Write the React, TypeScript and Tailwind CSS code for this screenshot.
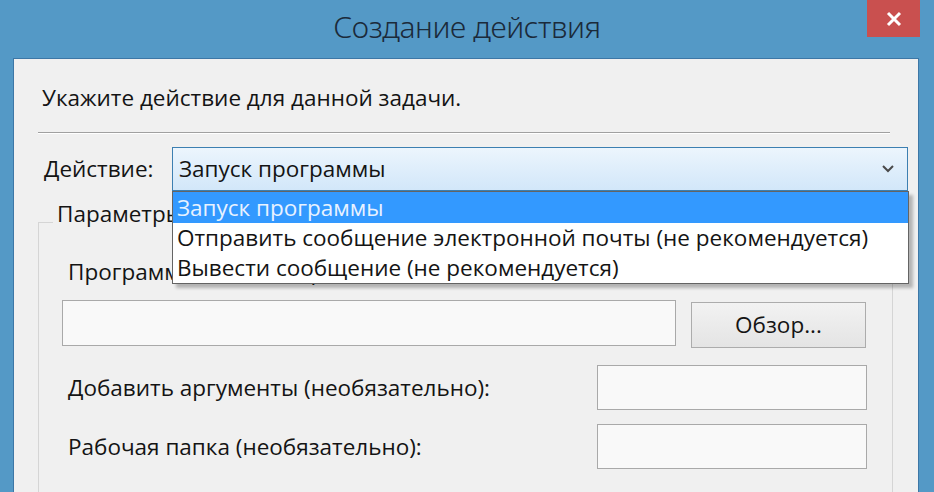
import React from "react";

const font = { fontFamily: '"Open Sans", "Noto Sans", sans-serif' };

function Chevron() {
  return (
    <svg width="14" height="10" viewBox="0 0 14 10" fill="none">
      <path d="M2 2 L7 7 L12 2" stroke="#4a4a4a" strokeWidth="2" fill="none" />
    </svg>
  );
}

function Field({ className }: { className: string }) {
  return <div className={"border border-[#a9a9a9] bg-[#f9f9f9] " + className} />;
}

export default function App() {
  return (
    <div
      className="w-[934px] h-[492px] bg-[#5499c6] overflow-hidden flex flex-col text-[#141414]"
      style={font}
    >
      {/* title bar */}
      <div className="h-[58px] relative flex justify-center shrink-0 pt-[12px]">
        <div
          className="text-[30px] text-[#1b2a3a] tracking-[-0.4px] leading-[30px]"
          style={{ fontFamily: '"Noto Sans", "Open Sans", sans-serif', fontWeight: 300 }}
        >
          Создание действия
        </div>
        <div className="absolute top-0 right-[14px] w-[53px] h-[37px] bg-[#c9504f] flex items-center justify-center">
          <svg width="16" height="16" viewBox="0 0 16 16">
            <path d="M2 2 L14 14 M14 2 L2 14" stroke="#fff" strokeWidth="3" />
          </svg>
        </div>
      </div>

      {/* client area */}
      <div className="ml-[13px] mr-[15px] flex-1 bg-[#f0f0f0] border border-[#3d77a6] border-b-0 relative text-[22.5px] leading-[30px]">
        <div className="pl-[28px] pt-[24px] h-[54px]">Укажите действие для данной задачи.</div>
        <div className="ml-[24px] mr-[28px] mt-[19px] h-[2px] border-t border-[#a0a0a0] border-b border-b-white" />

        {/* action row */}
        <div className="flex items-center mt-[13px] pl-[30px]">
          <div className="w-[128px]">Действие:</div>
          <div className="relative w-[736px] h-[44px]">
            <div className="h-full border border-[#3c7fb1] bg-gradient-to-b from-[#ecf5fd] to-[#d2e7f9] flex items-center pl-[6px] pr-[12px]">
              <span className="flex-1">Запуск программы</span>
              <Chevron />
            </div>
            {/* dropdown list */}
            <div className="absolute left-0 top-[44px] w-[737px] bg-white border border-[#646464] z-10 shadow-[4px_4px_3px_rgba(0,0,0,0.25)] flex flex-col">
              <div className="h-[31px] bg-[#3399ff] text-[#e8f2ff] pl-[4px] leading-[31px]">Запуск программы</div>
              <div className="h-[30px] pl-[4px] leading-[30px]">Отправить сообщение электронной почты (не рекомендуется)</div>
              <div className="h-[30px] pl-[4px] leading-[30px]">Вывести сообщение (не рекомендуется)</div>
            </div>
          </div>
        </div>

        {/* group box */}
        <div className="relative ml-[24px] mr-[25px] mt-[31px] border-l border-t border-r border-[#d5d5d5] h-[300px]">
          <div className="absolute left-[14px] top-[-24px] bg-[#f0f0f0] px-[4px]">Параметры</div>
          <div className="pl-[23px] pr-[25px] pt-[34px] flex flex-col">
            <div className="pl-[6px]">Программа или сценарий:</div>
            <div className="flex items-start mt-[13px]">
              <Field className="w-[614px] h-[46px]" />
              <div className="ml-[15px] w-[175px] h-[46px] border border-[#acacac] bg-gradient-to-b from-[#f2f2f2] to-[#e4e4e4] flex items-center justify-center mt-[2px]">
                Обзор...
              </div>
            </div>
            <div className="flex items-center justify-between mt-[17px]">
              <div className="pl-[6px]">Добавить аргументы (необязательно):</div>
              <Field className="w-[270px] h-[45px]" />
            </div>
            <div className="flex items-center justify-between mt-[14px]">
              <div className="pl-[6px]">Рабочая папка (необязательно):</div>
              <Field className="w-[270px] h-[45px]" />
            </div>
          </div>
        </div>
      </div>
    </div>
  );
}
